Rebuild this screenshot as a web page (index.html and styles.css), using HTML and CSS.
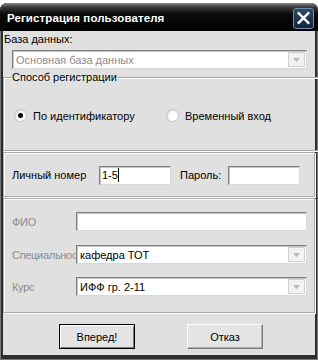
FILE: index.html
```html
<!DOCTYPE html>
<html lang="ru">
<head>
  <meta charset="UTF-8" />
  <title>Регистрация пользователя</title>
  <link rel="stylesheet" href="styles.css">
</head>
<body>
  <div class="window">
    <div class="titlebar">
      <span class="title">Регистрация пользователя</span>
      <span class="close">
        <svg width="20" height="20" viewBox="0 0 20 20">
          <path d="M5 5 L15 15 M15 5 L5 15" stroke="#fff" stroke-width="2.6" stroke-linecap="square" />
        </svg>
      </span>
    </div>

    <div class="content">
      <div class="db-label">База данных:</div>
      <div class="combo db-combo disabled">
        <span class="combo-text">Основная база данных</span>
        <span class="combo-btn">
          <svg width="7" height="4" viewBox="0 0 7 4"><path d="M0 0 H7 L3.5 4 Z" fill="#b8b8b8" /></svg>
        </span>
      </div>

      <fieldset class="group">
        <legend>Способ регистрации</legend>
        <div class="radios">
          <label class="radio"><span class="dot checked"></span>По идентификатору</label>
          <label class="radio"><span class="dot"></span>Временный вход</label>
        </div>
      </fieldset>

      <div class="panel login">
        <span class="login-label">Личный номер</span>
        <div class="edit login-edit">1-5<span class="caret"></span></div>
        <span class="pass-label">Пароль:</span>
        <div class="edit login-edit"></div>
      </div>

      <div class="panel info">
        <div class="row">
          <span class="row-label">ФИО</span>
          <div class="edit wide"></div>
        </div>
        <div class="row">
          <span class="row-label">Специальнос</span>
          <div class="combo wide">
            <span class="combo-text">кафедра ТОТ</span>
            <span class="combo-btn">
              <svg width="7" height="4" viewBox="0 0 7 4"><path d="M0 0 H7 L3.5 4 Z" fill="#b8b8b8" /></svg>
            </span>
          </div>
        </div>
        <div class="row">
          <span class="row-label">Курс</span>
          <div class="combo wide">
            <span class="combo-text">ИФФ гр. 2-11</span>
            <span class="combo-btn">
              <svg width="7" height="4" viewBox="0 0 7 4"><path d="M0 0 H7 L3.5 4 Z" fill="#b8b8b8" /></svg>
            </span>
          </div>
        </div>
      </div>

      <div class="buttons">
        <button class="btn default">Вперед!</button>
        <button class="btn">Отказ</button>
      </div>
    </div>
  </div>
</body>
</html>
```

FILE: styles.css
```css
body {
  margin: 0;
  background: #fff;
  font-family: 'Liberation Sans', Arial, sans-serif;
  font-size: 11px;
  color: #000;
}
.window {
  box-sizing: border-box;
  width: 318px;
  height: 357px;
  margin-top: 3px;
  border-radius: 7px 7px 0 0;
  background: #2e2e2e;
  display: flex;
  flex-direction: column;
  padding: 0 3px 5px 3px;
  box-shadow: inset 1px 0 0 #7a7a7a, inset -1px 0 0 #7a7a7a, inset 0 -1px 0 #7a7a7a;
}

/* Title bar */
.titlebar {
  height: 28px;
  margin: 0 -3px;
  padding: 0 4px 0 7px;
  border-radius: 7px 7px 0 0;
  background: linear-gradient(to bottom, #8a8a8a 0px, #3a3a3a 4px, #0c0c0c 11px, #000 100%);
  display: flex;
  align-items: center;
  justify-content: space-between;
}
.title {
  color: #fff;
  font-weight: bold;
  font-size: 11.5px;
  letter-spacing: 0.1px;
  padding-top: 1px;
}
.close {
  width: 19px;
  height: 19px;
  margin-top: 2px;
  border: 1px solid #6f8ca8;
  border-radius: 3px;
  background: linear-gradient(to bottom, #2a4a68, #10263c);
  display: flex;
  align-items: center;
  justify-content: center;
}

.content {
  flex: 1;
  background: #e0e0e0;
  display: flex;
  flex-direction: column;
}
.db-label {
  height: 17px;
  line-height: 17px;
  padding-left: 1px;
}

/* Combo boxes and edits */
.combo,
.edit {
  box-sizing: border-box;
  height: 19px;
  background: #fff;
  border: 1px solid #7f7f7f;
  border-right-color: #d8d8d8;
  border-bottom-color: #d8d8d8;
  box-shadow: inset 1px 1px 0 #c8c8c8;
  display: flex;
  align-items: center;
}
.combo-text {
  flex: 1;
  padding-left: 3px;
  white-space: nowrap;
}
.combo-btn {
  box-sizing: border-box;
  width: 17px;
  height: 15px;
  margin-right: 1px;
  border: 1px solid #cfcfcf;
  background: #f2f2f2;
  display: flex;
  align-items: center;
  justify-content: center;
}
.db-combo {
  margin: 2px 8px 0 9px;
}
.disabled .combo-text {
  color: #8c8c8c;
}

/* Registration method group */
.group {
  margin: 2px 0 0 0;
  padding: 0;
  height: 80px;
  box-sizing: border-box;
  border: 1px solid #a8a8a8;
  box-shadow: inset 1px 1px 0 #fff, 1px 1px 0 #fff;
}
.group legend {
  margin-left: 7px;
  padding: 0 1px;
  line-height: 12px;
}
.radios {
  display: flex;
  padding: 26px 0 0 10px;
}
.radio {
  display: flex;
  align-items: center;
  width: 152px;
}
.dot {
  box-sizing: border-box;
  width: 13px;
  height: 13px;
  margin-right: 6px;
  border-radius: 50%;
  background: radial-gradient(circle at 60% 60%, #fff 40%, #e4e4e4 70%, #b4b4b4 100%);
  border: 1px solid #c4c4c4;
  position: relative;
}
.dot.checked::after {
  content: '';
  position: absolute;
  left: 3px;
  top: 3px;
  width: 5px;
  height: 5px;
  border-radius: 50%;
  background: #000;
}

/* Panels */
.panel {
  box-sizing: border-box;
  border: 1px solid #a8a8a8;
  box-shadow: inset 1px 1px 0 #fff, 1px 1px 0 #fff;
}
.login {
  margin-top: 1px;
  height: 45px;
  display: flex;
  align-items: center;
  padding: 1px 0 0 8px;
}
.login-label {
  width: 87px;
}
.login-edit {
  width: 72px;
  padding-left: 2px;
}
.pass-label {
  margin-left: 9px;
  width: 48px;
}
.caret {
  display: inline-block;
  width: 1px;
  height: 14px;
  background: #000;
}
.info {
  margin-top: 1px;
  height: 115px;
  padding: 13px 0 0 8px;
  display: flex;
  flex-direction: column;
  gap: 14px;
}
.row {
  display: flex;
  align-items: center;
}
.row-label {
  width: 64px;
  white-space: nowrap;
  letter-spacing: -0.3px;
  color: #8c8c8c;
}
.wide {
  width: 231px;
}
.info .row:last-child {
  margin-top: -1px;
}

/* Buttons */
.buttons {
  display: flex;
  padding: 11px 0 0 56px;
  gap: 52px;
}
.btn {
  box-sizing: border-box;
  width: 76px;
  height: 25px;
  font-family: 'Liberation Sans', Arial, sans-serif;
  font-size: 11px;
  background: #e4e4e4;
  border: 1px solid;
  border-color: #fff #7a7a7a #7a7a7a #fff;
  box-shadow: inset -1px -1px 0 #b0b0b0;
  padding: 0;
}
.btn.default {
  border: 1px solid #000;
  box-shadow: inset 1px 1px 0 #fff, inset -1px -1px 0 #7a7a7a;
}
```
